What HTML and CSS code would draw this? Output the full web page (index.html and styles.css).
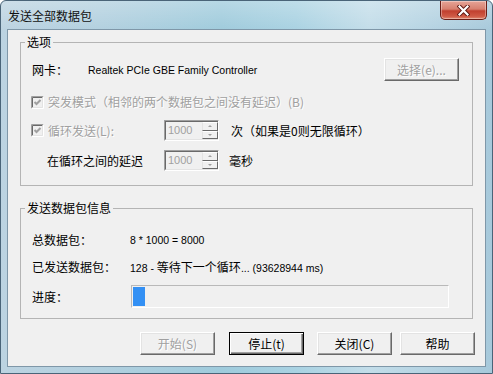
FILE: index.html
```html
<!DOCTYPE html>
<html lang="zh-CN">
<head>
<meta charset="utf-8">
<title>发送全部数据包</title>
<link rel="stylesheet" href="styles.css">
</head>
<body>
<div class="window">
  <div class="titlebar">
    <span class="title">发送全部数据包</span>
    <div class="close">
      <svg width="13" height="11" viewBox="0 0 13 11"><path d="M2.5 1.5 L10.5 9.5 M10.5 1.5 L2.5 9.5" stroke="#5a1510" stroke-width="4" stroke-linecap="square"/><path d="M2.5 1.5 L10.5 9.5 M10.5 1.5 L2.5 9.5" stroke="#ffffff" stroke-width="2.2" stroke-linecap="square"/></svg>
    </div>
  </div>
  <div class="client">
    <fieldset class="group group-options">
      <legend>选项</legend>
      <div class="options-body">
        <div class="row row-nic">
          <span class="nic-label">网卡：</span>
          <span class="latin">Realtek PCIe GBE Family Controller</span>
          <button class="btn btn-disabled btn-select">选择(e)...</button>
        </div>
        <div class="row row-burst">
          <span class="check"><svg width="13" height="13" viewBox="0 0 13 13"><path d="M0.5 12.5V0.5H12.5" stroke="#a0a0a0" fill="none"/><path d="M0.5 12.5H12.5V0.5" stroke="#ffffff" fill="none"/><path d="M1.5 11.5V1.5H11.5" stroke="#696969" fill="none"/><path d="M1.5 11.5H11.5V1.5" stroke="#e3e3e3" fill="none"/><path d="M3.5 6 L5.5 8 L9.5 4" stroke="#a0a0a0" stroke-width="2" fill="none"/></svg></span>
          <span class="dim">突发模式（相邻的两个数据包之间没有延迟）(B)</span>
        </div>
        <div class="row row-loop">
          <div class="lead">
            <span class="check"><svg width="13" height="13" viewBox="0 0 13 13"><path d="M0.5 12.5V0.5H12.5" stroke="#a0a0a0" fill="none"/><path d="M0.5 12.5H12.5V0.5" stroke="#ffffff" fill="none"/><path d="M1.5 11.5V1.5H11.5" stroke="#696969" fill="none"/><path d="M1.5 11.5H11.5V1.5" stroke="#e3e3e3" fill="none"/><path d="M3.5 6 L5.5 8 L9.5 4" stroke="#a0a0a0" stroke-width="2" fill="none"/></svg></span>
            <span class="dim">循环发送(L):</span>
          </div>
          <div class="spin">
            <span class="spin-edit">1000</span>
            <span class="spin-btns"><span class="spin-btn up"></span><span class="spin-btn down"></span></span>
          </div>
          <span class="after">次（如果是0则无限循环）</span>
        </div>
        <div class="row row-delay">
          <div class="lead lead-indent">在循环之间的延迟</div>
          <div class="spin">
            <span class="spin-edit">1000</span>
            <span class="spin-btns"><span class="spin-btn up"></span><span class="spin-btn down"></span></span>
          </div>
          <span class="after after-ms">毫秒</span>
        </div>
      </div>
    </fieldset>

    <fieldset class="group group-info">
      <legend>发送数据包信息</legend>
      <div class="info-body">
        <div class="row info-row">
          <span class="info-label">总数据包：</span>
          <span class="latin">8 * 1000 = 8000</span>
        </div>
        <div class="row info-row info-row2">
          <span class="info-label">已发送数据包：</span>
          <span><span class="latin">128 - </span>等待下一个循环<span class="latin">... (93628944 ms)</span></span>
        </div>
        <div class="row info-row info-row3">
          <span class="info-label">进度：</span>
          <div class="progress"><div class="progress-fill" style="width: 12px"></div></div>
        </div>
      </div>
    </fieldset>

    <div class="buttons">
      <button class="btn btn-disabled btn-start">开始(S)</button>
      <button class="btn btn-default btn-stop">停止(t)</button>
      <button class="btn btn-close">关闭(C)</button>
      <button class="btn btn-help">帮助</button>
    </div>
  </div>
</div>
</body>
</html>
```

FILE: styles.css
```css
html, body {
  margin: 0;
  padding: 0;
}
body {
  width: 493px;
  height: 374px;
  overflow: hidden;
  font-family: "Noto Sans CJK SC", sans-serif;
  font-size: 12px;
  line-height: 16px;
  color: #000;
  background: #fff;
}
.window {
  width: 493px;
  height: 374px;
  box-sizing: border-box;
  border: 1px solid #4a6478;
  border-radius: 6px 6px 0 0;
  background:
    linear-gradient(to bottom, rgba(255,255,255,0.25), rgba(255,255,255,0) 30px),
    linear-gradient(to right, #bcd3e1 0%, #b2d0df 20%, #9fcbdc 45%, #a9d2e2 60%, #c3dde9 75%, #a7c9db 100%);
  padding: 0 6px 6px;
  display: flex;
  flex-direction: column;
}
.titlebar {
  height: 28px;
  display: flex;
  align-items: flex-start;
}
.title {
  margin-top: 7px;
  margin-left: 1px;
  line-height: 16px;
  color: #111;
}
.close {
  margin-left: auto;
  margin-right: -1px;
  width: 47px;
  height: 19px;
  box-sizing: border-box;
  border: 1px solid #6a1e17;
  border-top: none;
  border-radius: 0 0 5px 5px;
  background: linear-gradient(to bottom, #e6a497 0%, #d7806f 45%, #c1402f 55%, #cf5a45 85%, #e08a72 100%);
  display: flex;
  align-items: center;
  justify-content: center;
  box-shadow: inset 0 0 0 1px rgba(255,255,255,0.35);
}
.client {
  flex: 1;
  background: #f0f0f0;
  border: 1px solid #7f97a8;
  padding: 4px 12px 0 12px;
  display: flex;
  flex-direction: column;
}
.group {
  margin: 0;
  padding: 0;
  border: 1px solid #b4b4b4;
  min-width: 0;
}
.group legend {
  margin-left: 4px;
  padding: 0 2px;
  line-height: 16px;
}
.group-info {
  margin-top: 14px;
}
.options-body {
  padding: 8px 0 14px 10px;
  display: flex;
  flex-direction: column;
}
.row {
  display: flex;
  align-items: center;
}
.latin {
  font-family: "Liberation Sans", sans-serif;
  font-size: 10.5px;
}
.row-nic {
  height: 23px;
}
.nic-label {
  width: 56px;
  padding-left: 1px;
}
.row-burst {
  margin-top: 11px;
  height: 20px;
}
.check {
  width: 13px;
  height: 13px;
  display: flex;
  margin-right: 4px;
}
.dim {
  color: #a0a0a0;
  text-shadow: 1px 1px 0 #fff;
}
.row-loop {
  margin-top: 8px;
  height: 21px;
}
.row-delay {
  margin-top: 9px;
  height: 21px;
}
.lead {
  width: 133px;
  display: flex;
  align-items: center;
}
.lead-indent {
  padding-left: 16px;
  box-sizing: border-box;
}
.spin {
  width: 55px;
  height: 21px;
  box-sizing: border-box;
  border: 1px solid;
  border-color: #a0a0a0 #ffffff #ffffff #a0a0a0;
  display: flex;
  background: #f0f0f0;
}
.spin-edit {
  flex: 1;
  border: 1px solid;
  border-color: #696969 #f0f0f0 #e3e3e3 #696969;
  border-right: none;
  color: #a0a0a0;
  font-family: "Liberation Sans", sans-serif;
  font-size: 11px;
  line-height: 17px;
  padding-left: 2px;
}
.spin-btns {
  width: 16px;
  display: flex;
  flex-direction: column;
  border-top: 1px solid #696969;
  border-bottom: 1px solid #e3e3e3;
}
.spin-btn {
  flex: 1;
  box-sizing: border-box;
  border: 1px solid;
  border-color: #ffffff #696969 #696969 #e3e3e3;
  display: flex;
  align-items: center;
  justify-content: center;
}
.spin-btn::after {
  content: "";
  width: 0;
  height: 0;
  border-left: 2px solid transparent;
  border-right: 2px solid transparent;
}
.spin-btn.up::after {
  border-bottom: 2px solid #a0a0a0;
}
.spin-btn.down::after {
  border-top: 2px solid #a0a0a0;
}
.after {
  margin-left: 12px;
}
.after-ms {
  margin-left: 10px;
}
.info-body {
  padding: 14px 0 10px 10px;
  display: flex;
  flex-direction: column;
}
.info-row {
  height: 20px;
}
.info-label {
  width: 99px;
  padding-left: 1px;
  box-sizing: border-box;
  flex-shrink: 0;
}
.info-row2 {
  margin-top: 7px;
}
.info-row3 {
  margin-top: 8px;
  height: 23px;
}
.progress {
  margin-left: 1px;
  width: 318px;
  height: 23px;
  box-sizing: border-box;
  border: 1px solid;
  border-color: #b9b9b9 #ffffff #ffffff #b9b9b9;
  padding: 1px;
  background: #f0f0f0;
  display: flex;
}
.progress-fill {
  height: 100%;
  background: #3390f4;
}
.buttons {
  margin-top: 13px;
  margin-right: -2px;
  display: flex;
  justify-content: flex-end;
}
.btn {
  width: 75px;
  height: 23px;
  box-sizing: border-box;
  margin: 0;
  padding: 0;
  font-family: "Noto Sans CJK SC", sans-serif;
  font-size: 12px;
  line-height: 16px;
  color: #000;
  background: #f0f0f0;
  border: 1px solid;
  border-color: #ffffff #696969 #696969 #ffffff;
  box-shadow: inset -1px -1px 0 #a0a0a0, inset 1px 1px 0 #e3e3e3;
  border-radius: 0;
}
.btn-disabled {
  color: #a0a0a0;
  text-shadow: 1px 1px 0 #fff;
}
.btn-default {
  border-color: #000;
  box-shadow: inset 1px 1px 0 #fff, inset -1px -1px 0 #696969, inset -2px -2px 0 #a0a0a0;
}
.btn-select {
  margin-left: auto;
  margin-right: 13px;
}
.btn-stop {
  margin-left: 14px;
}
.btn-close {
  margin-left: 13px;
}
.btn-help {
  margin-left: 8px;
}
```
